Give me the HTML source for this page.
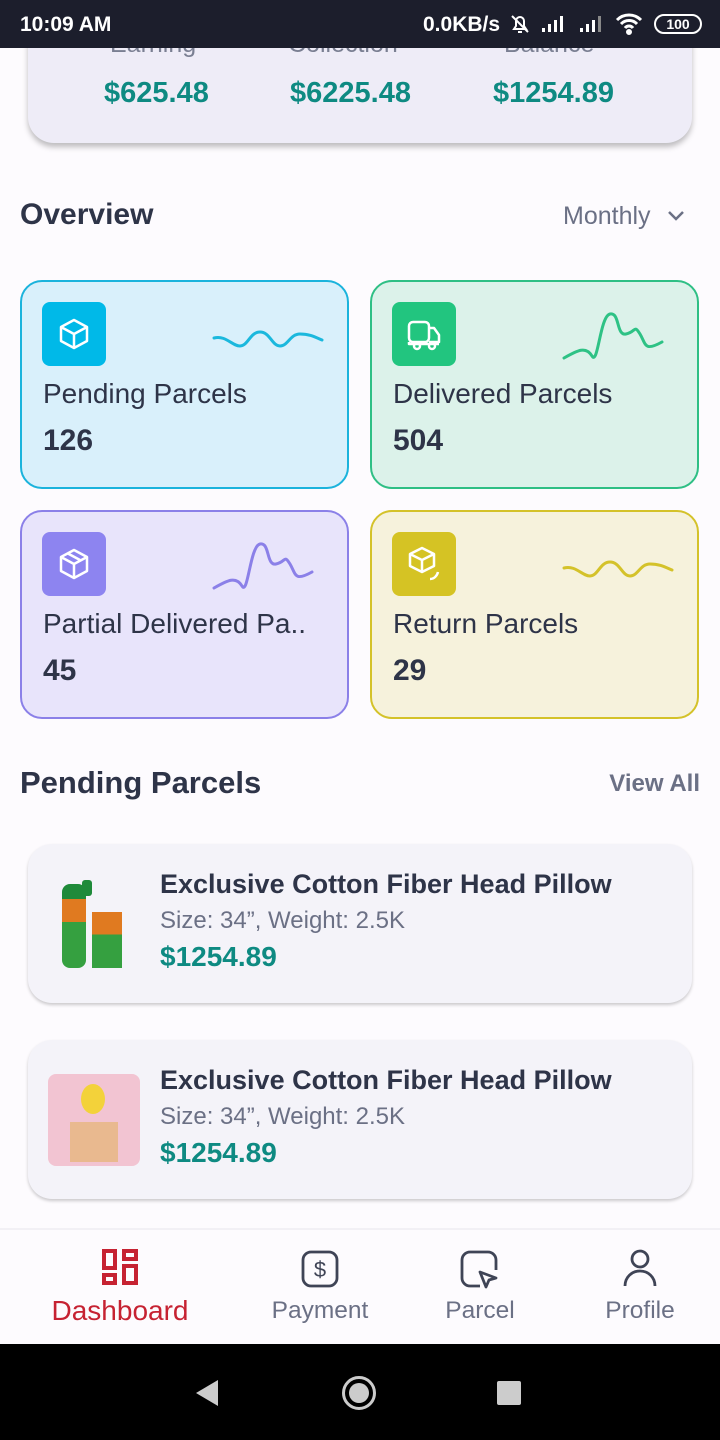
<!DOCTYPE html>
<html><head><meta charset="utf-8"><style>
*{margin:0;padding:0;box-sizing:border-box}
body{width:720px;height:1440px;background:#fdfbfe;font-family:"Liberation Sans",sans-serif;color:#2e3448;position:relative;overflow:hidden}
.abs{position:absolute}
.status{left:0;top:0;width:720px;height:48px;background:#1c1e2c;color:#fff;font-size:21px;font-weight:bold}
.top{left:28px;top:10px;width:664px;height:133px;background:#eeecf7;border-radius:26px;box-shadow:0 4px 6px rgba(0,0,0,.25)}
.amt{color:#0e8a82;font-weight:bold;font-size:29px;top:67px}
.lbl{color:#7a7f92;font-size:25px;top:20px}
.card{width:329px;height:209px;border-radius:22px;border:2px solid}
.card .ic{position:absolute;left:20px;top:20px;width:64px;height:64px;border-radius:8px}
.card .t{position:absolute;left:21px;top:96px;font-size:28px;color:#2e3448}
.card .n{position:absolute;left:21px;top:142px;font-size:30px;font-weight:bold}
.card svg.w{position:absolute;left:190px;top:20px}
.prod{left:28px;width:664px;height:159px;background:#f4f3f9;border-radius:24px;box-shadow:0 2px 3px rgba(0,0,0,.2)}
.prod .h{position:absolute;left:132px;top:25px;font-size:27px;font-weight:bold;color:#2e3448}
.prod .s{position:absolute;left:132px;top:63px;font-size:24px;color:#6b7085}
.prod .p{position:absolute;left:132px;top:97px;font-size:28px;font-weight:bold;color:#0e8a82}
.nav{left:0;top:1228px;width:720px;height:116px;background:#fdfbfe;border-top:2px solid #f2f0f5}
.nl{position:absolute;top:67px;font-size:24.5px;color:#6b7085;text-align:center;width:160px}
</style></head><body>
<div class="abs top">
 <div class="abs lbl" style="left:82px">Earning</div>
 <div class="abs lbl" style="left:260px">Collection</div>
 <div class="abs lbl" style="left:476px">Balance</div>
 <div class="abs amt" style="left:76px">$625.48</div>
 <div class="abs amt" style="left:262px">$6225.48</div>
 <div class="abs amt" style="left:465px">$1254.89</div>
</div>
<div class="abs status">
 <div class="abs" style="left:20px;top:13px">10:09 AM</div>
 <div class="abs" style="left:423px;top:13px">0.0KB/s</div>
 <svg class="abs" style="left:508px;top:12px" width="24" height="24" viewBox="0 0 24 24" fill="none" stroke="#fff" stroke-width="2"><path d="M6 17h12l-2-3V9a4 4 0 0 0-8 0v5zM10 20h4M4 4l16 16"/></svg>
 <svg class="abs" style="left:540px;top:14px" width="30" height="20"><rect x="2" y="14" width="3" height="4" fill="#fff"/><rect x="8" y="10" width="3" height="8" fill="#fff"/><rect x="14" y="6" width="3" height="12" fill="#fff"/><rect x="20" y="2" width="3" height="16" fill="#fff"/></svg>
 <svg class="abs" style="left:578px;top:14px" width="30" height="20"><rect x="2" y="14" width="3" height="4" fill="#fff"/><rect x="8" y="10" width="3" height="8" fill="#fff"/><rect x="14" y="6" width="3" height="12" fill="#fff"/><rect x="20" y="2" width="3" height="16" fill="#888"/></svg>
 <svg class="abs" style="left:614px;top:12px" width="30" height="24" viewBox="0 0 30 24" fill="none" stroke="#fff" stroke-width="3"><path d="M3 8a17 17 0 0 1 24 0M7 12a11 11 0 0 1 16 0M11 16a5 5 0 0 1 8 0"/><circle cx="15" cy="20" r="1.5" fill="#fff"/></svg>
 <div class="abs" style="left:654px;top:14px;width:48px;height:20px;border:2px solid #fff;border-radius:10px;font-size:14px;text-align:center;line-height:16px">100</div>
</div>
<div class="abs" style="left:20px;top:198px;font-size:30px;font-weight:bold">Overview</div>
<div class="abs" style="left:563px;top:202px;font-size:25px;color:#6b7085">Monthly</div>
<svg class="abs" style="left:666px;top:208px" width="20" height="16" viewBox="0 0 20 16" fill="none" stroke="#6b7085" stroke-width="2.5"><path d="M3 4l7 7 7-7"/></svg>

<div class="abs card" style="left:20px;top:280px;background:#d9f0fb;border-color:#1bb3dc">
 <div class="ic" style="background:#00b9e8"><svg width="64" height="64" viewBox="0 0 64 64" fill="none" stroke="#fff" stroke-width="2.5" stroke-linejoin="round"><path d="M32 18l13 7v14l-13 7-13-7V25zM19 25l13 7 13-7M32 32v14"/></svg></div>
 <svg class="w" width="120" height="50"><path d="M2 36c12-3 18 8 26 8s10-14 20-14 12 14 20 14 10-12 20-12 15 3 22 6" stroke="#1bb8dd" stroke-width="3" fill="none" stroke-linecap="round"/></svg>
 <div class="t">Pending Parcels</div><div class="n">126</div>
</div>
<div class="abs card" style="left:370px;top:280px;background:#dcf2ea;border-color:#2fbf85">
 <div class="ic" style="background:#22c57f"><svg width="64" height="64" viewBox="0 0 64 64" fill="none" stroke="#fff" stroke-width="2.5" stroke-linejoin="round"><rect x="17" y="20" width="20" height="20" rx="4"/><path d="M37 26h5l5 7v7H37M17 40v2h30"/><circle cx="25" cy="44" r="3"/><circle cx="40" cy="44" r="3"/></svg></div>
 <svg class="w" width="120" height="60"><path d="M2 56c14-8 22-12 28-2s8-40 18-42 6 22 16 20 8-10 14 0 4 18 22 8" stroke="#2ec285" stroke-width="3" fill="none" stroke-linecap="round"/></svg>
 <div class="t">Delivered Parcels</div><div class="n">504</div>
</div>
<div class="abs card" style="left:20px;top:510px;background:#e8e4fb;border-color:#8b80e8">
 <div class="ic" style="background:#8d84f0"><svg width="64" height="64" viewBox="0 0 64 64" fill="none" stroke="#fff" stroke-width="2.5" stroke-linejoin="round"><path d="M32 18l13 7v14l-13 7-13-7V25zM19 25l13 7 13-7M32 32v14M25 21l13 7"/></svg></div>
 <svg class="w" width="120" height="60"><path d="M2 56c14-8 22-12 28-2s8-40 18-42 6 22 16 20 8-10 14 0 4 18 22 8" stroke="#8b80e8" stroke-width="3" fill="none" stroke-linecap="round"/></svg>
 <div class="t">Partial Delivered Pa..</div><div class="n">45</div>
</div>
<div class="abs card" style="left:370px;top:510px;background:#f6f2dc;border-color:#d4c22a">
 <div class="ic" style="background:#d5c324"><svg width="64" height="64" viewBox="0 0 64 64" fill="none" stroke="#fff" stroke-width="2.5" stroke-linejoin="round"><path d="M30 16l12 6v12l-12 6-12-6V22zM18 22l12 6 12-6M30 28v12M46 40c-1 4-4 7-8 7"/></svg></div>
 <svg class="w" width="120" height="50"><path d="M2 36c12-3 18 8 26 8s10-14 20-14 12 14 20 14 10-12 20-12 15 3 22 6" stroke="#d4c22a" stroke-width="3" fill="none" stroke-linecap="round"/></svg>
 <div class="t">Return Parcels</div><div class="n">29</div>
</div>

<div class="abs" style="left:20px;top:765px;font-size:31px;font-weight:bold">Pending Parcels</div>
<div class="abs" style="right:20px;top:770px;font-size:24px;font-weight:bold;color:#6b7085">View All</div>

<div class="abs prod" style="top:844px">
 <div class="abs" style="left:34px;top:40px;width:24px;height:84px;border-radius:8px;background:linear-gradient(#1f8a3a 0 18%,#e07a20 18% 45%,#35a040 45%)"></div>
 <div class="abs" style="left:54px;top:36px;width:10px;height:16px;background:#1f8a3a;border-radius:3px"></div>
 <div class="abs" style="left:64px;top:68px;width:30px;height:56px;background:linear-gradient(#e07a20 0 40%,#35a040 40%)"></div>
 <div class="h">Exclusive Cotton Fiber Head Pillow</div><div class="s">Size: 34”, Weight: 2.5K</div><div class="p">$1254.89</div>
</div>
<div class="abs prod" style="top:1040px">
 <div class="abs" style="left:20px;top:34px;width:92px;height:92px;border-radius:8px;background:#f2c4d2;overflow:hidden">
  <div class="abs" style="left:33px;top:10px;width:24px;height:30px;border-radius:50%;background:#f3d23a"></div>
  <div class="abs" style="left:22px;top:48px;width:48px;height:40px;background:#e9b98f"></div>
 </div>
 <div class="h">Exclusive Cotton Fiber Head Pillow</div><div class="s">Size: 34”, Weight: 2.5K</div><div class="p">$1254.89</div>
</div>

<div class="abs nav">
 <svg class="abs" style="left:101px;top:18px" width="38" height="38" viewBox="0 0 38 38" fill="none" stroke="#c62232" stroke-width="4"><rect x="3" y="3" width="11" height="17"/><rect x="23" y="3" width="12" height="8"/><rect x="3" y="27" width="11" height="8"/><rect x="23" y="18" width="12" height="17"/></svg>
 <svg class="abs" style="left:301px;top:20px" width="38" height="38" viewBox="0 0 38 38" fill="none" stroke="#3f4456" stroke-width="2.8"><rect x="2" y="2" width="34" height="34" rx="8"/><text x="19" y="27" font-size="22" font-family="Liberation Sans" fill="#3f4456" stroke="none" text-anchor="middle">$</text></svg>
 <svg class="abs" style="left:460px;top:20px" width="40" height="40" viewBox="0 0 40 40" fill="none" stroke="#3f4456" stroke-width="2.8" stroke-linejoin="round"><path d="M20 36H10a8 8 0 0 1-8-8V10a8 8 0 0 1 8-8h18a8 8 0 0 1 8 8v10"/><path d="M20 22l16 6-7 2-3 7z"/></svg>
 <svg class="abs" style="left:622px;top:18px" width="36" height="40" viewBox="0 0 36 40" fill="none" stroke="#3f4456" stroke-width="2.8"><circle cx="18" cy="11" r="8"/><path d="M3 38c0-9 7-15 15-15s15 6 15 15"/></svg>
 <div class="nl" style="left:40px;top:65px;font-size:28px;color:#c62232">Dashboard</div>
 <div class="nl" style="left:240px">Payment</div>
 <div class="nl" style="left:400px">Parcel</div>
 <div class="nl" style="left:560px">Profile</div>
</div>
<div class="abs" style="left:0;top:1344px;width:720px;height:96px;background:#000">
 <svg class="abs" style="left:194px;top:34px" width="28" height="30"><path d="M24 2L2 15l22 13z" fill="#ccc"/></svg>
 <div class="abs" style="left:342px;top:32px;width:34px;height:34px;border:3px solid #ccc;border-radius:50%"><div style="margin:4px;width:20px;height:20px;border-radius:50%;background:#ccc"></div></div>
 <div class="abs" style="left:497px;top:37px;width:24px;height:24px;background:#ccc;border-radius:2px"></div>
</div>
</body></html>
